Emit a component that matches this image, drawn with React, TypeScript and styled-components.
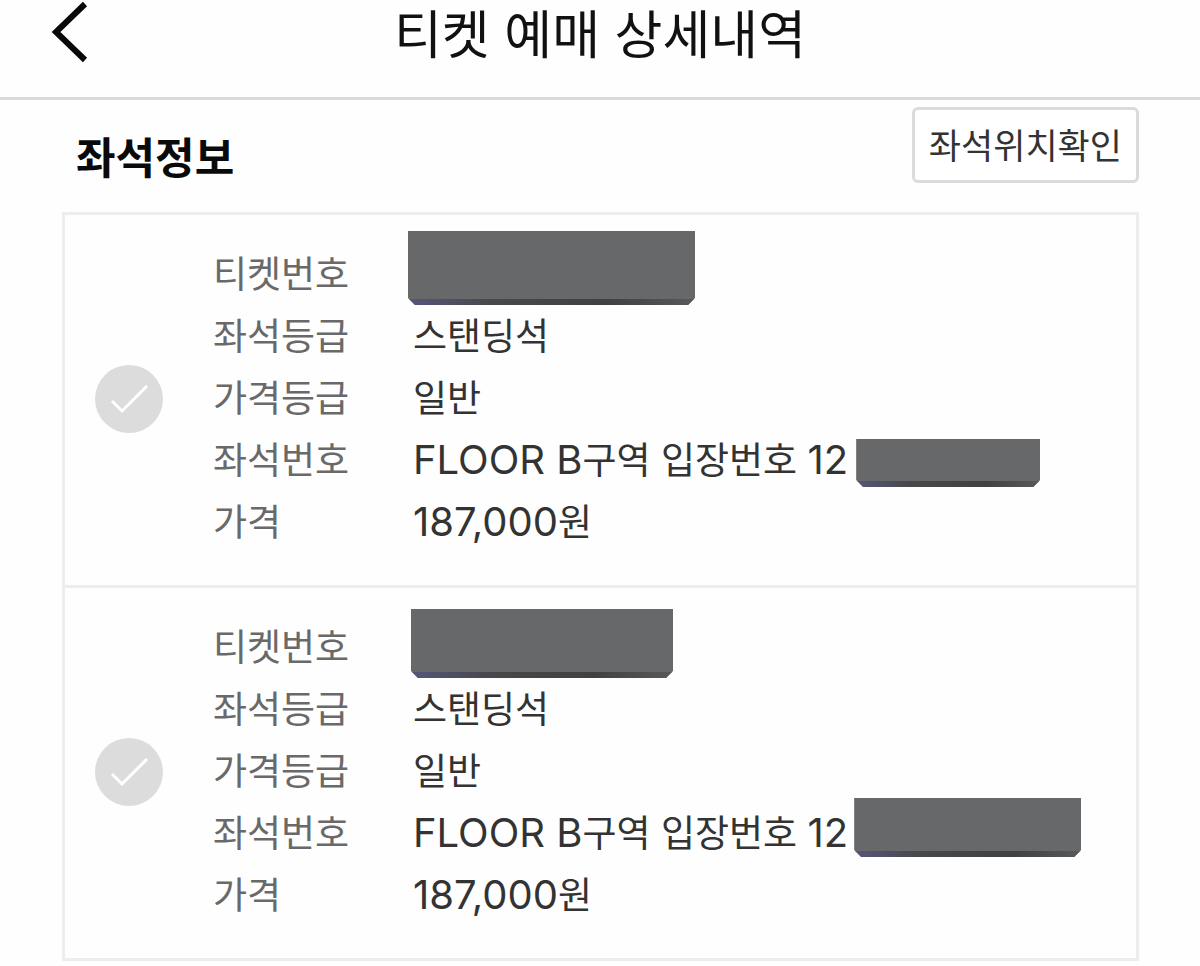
import React from "react";
import styled, { createGlobalStyle } from "styled-components";

const Global = createGlobalStyle`
  *, *::before, *::after { box-sizing: border-box; }
  body {
    margin: 0;
    background: #fefefe;
    color: #333;
    font-family: Inter, "Noto Sans CJK KR", sans-serif;
  }
`;

const Header = styled.header`
  display: grid;
  grid-template-columns: 100px 1fr 100px;
  height: 100px;
  padding-bottom: 26px;
  align-items: center;
  border-bottom: 3px solid #dbdbdb;
`;

const BackButton = styled.button`
  display: flex;
  align-items: center;
  padding: 0 0 8px 50px;
  border: 0;
  background: none;
  color: #080808;
  cursor: pointer;
`;

const Title = styled.h1`
  margin: 0;
  font-size: 52px;
  line-height: 72px;
  font-weight: 400;
  text-align: center;
  color: #111;
`;

const Main = styled.main`
  padding: 7px 61px 0 62px;
`;

const SectionHead = styled.div`
  display: flex;
  justify-content: space-between;
  align-items: flex-start;
  height: 105px;
`;

const SectionTitle = styled.h2`
  margin: 0;
  padding: 20px 0 0 14px;
  font-size: 43px;
  line-height: 62px;
  font-weight: 700;
  color: #0a0a0a;
`;

const OutlineButton = styled.button`
  height: 76px;
  padding: 0 14px 4px;
  border: 3px solid #dbdbdb;
  border-radius: 6px;
  background: #fff;
  color: #333;
  font-family: inherit;
  font-size: 35px;
  cursor: pointer;
`;

const SeatList = styled.ul`
  margin: 0;
  padding: 0;
  list-style: none;
  border: 3px solid #ededed;
`;

const Seat = styled.li`
  display: grid;
  grid-template-columns: 148px 1fr;
  align-items: center;
  padding: 29px 0 31px;

  & + & {
    border-top: 3px solid #ededed;
  }
`;

const CheckLabel = styled.label`
  position: relative;
  display: block;
  width: 68px;
  height: 68px;
  margin-left: 30px;
  cursor: pointer;
`;

const CheckInput = styled.input`
  appearance: none;
  display: block;
  width: 68px;
  height: 68px;
  margin: 0;
  border-radius: 50%;
  background: #dcdcdc;
`;

const CheckMark = styled.svg`
  position: absolute;
  inset: 0;
  pointer-events: none;
`;

const Details = styled.dl`
  display: grid;
  grid-template-columns: 200px 1fr;
  grid-auto-rows: 62px;
  margin: 0;
  font-size: 37px;
  line-height: 62px;
`;

const Term = styled.dt`
  color: #696969;
`;

const Value = styled.dd`
  display: flex;
  margin: 0;
  white-space: pre;
`;

const Latin = styled.span`
  font-size: 40px;
  line-height: 1;
`;

const Redaction = styled.span<{ $w: number; $h: number; $top: number; $left: number }>`
  flex: none;
  width: ${(p) => p.$w}px;
  height: ${(p) => p.$h}px;
  margin: ${(p) => p.$top}px 0 0 ${(p) => p.$left}px;
  background:
    linear-gradient(90deg, #55557c, #47484a 30%, #404142 70%, #58595b) bottom / 100% 6px no-repeat,
    #66686a;
  clip-path: polygon(0 0, 100% 0, 100% calc(100% - 7px), calc(100% - 7px) 100%, 7px 100%, 0 calc(100% - 7px));
`;

type Bar = { w: number; h: number; top: number; left: number };
const seats: { id: string; ticket: Bar; seat: Bar }[] = [
  { id: "first", ticket: { w: 287, h: 74, top: -13, left: -5 }, seat: { w: 184, h: 48, top: 9, left: 8 } },
  { id: "second", ticket: { w: 262, h: 69, top: -8, left: -2 }, seat: { w: 227, h: 59, top: -5, left: 6 } },
];

const Cover = ({ bar }: { bar: Bar }) => (
  <Redaction $w={bar.w} $h={bar.h} $top={bar.top} $left={bar.left} />
);

export default function App() {
  return (
    <>
      <Global />
      <Header>
        <BackButton aria-label="뒤로">
          <svg width="40" height="64" viewBox="0 0 40 64" fill="none">
            <path d="M35 4 L6 32 L35 60" stroke="currentColor" strokeWidth="6" />
          </svg>
        </BackButton>
        <Title>티켓 예매 상세내역</Title>
      </Header>
      <Main>
        <SectionHead>
          <SectionTitle>좌석정보</SectionTitle>
          <OutlineButton>좌석위치확인</OutlineButton>
        </SectionHead>
        <SeatList>
          {seats.map((s) => (
            <Seat key={s.id}>
              <CheckLabel>
                <CheckInput type="checkbox" aria-label="좌석 선택" />
                <CheckMark width="68" height="68" viewBox="0 0 68 68" fill="none">
                  <path d="M17 36 L27 46 L52 21" stroke="#fff" strokeWidth="3" />
                </CheckMark>
              </CheckLabel>
              <Details>
                <Term>티켓번호</Term>
                <Value><Cover bar={s.ticket} /></Value>
                <Term>좌석등급</Term>
                <Value>스탠딩석</Value>
                <Term>가격등급</Term>
                <Value>일반</Value>
                <Term>좌석번호</Term>
                <Value>
                  <span><Latin>FLOOR B</Latin>구역 입장번호 <Latin>12</Latin></span>
                  <Cover bar={s.seat} />
                </Value>
                <Term>가격</Term>
                <Value>
                  <span><Latin>187,000</Latin>원</span>
                </Value>
              </Details>
            </Seat>
          ))}
        </SeatList>
      </Main>
    </>
  );
}
